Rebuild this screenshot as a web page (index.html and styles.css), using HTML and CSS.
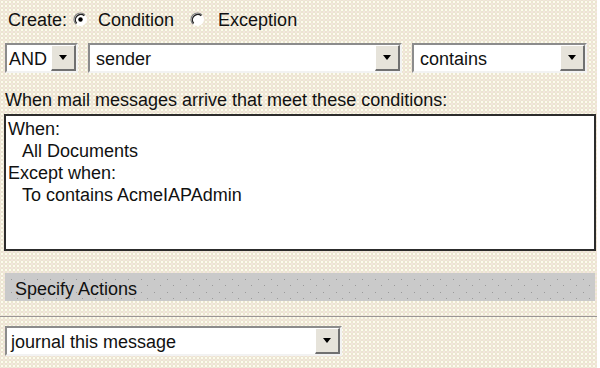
FILE: index.html
```html
<!DOCTYPE html>
<html lang="en">
<head>
    <meta charset="UTF-8">
    <meta name="viewport" content="width=device-width, initial-scale=1.0">
    <title>Mail rule</title>
    <link rel="stylesheet" href="styles.css">
</head>
<body>
    <div class="page">
        <div class="create-row">
            <span>Create:</span>
            <label class="radio">
                <svg width="15" height="15" viewBox="0 0 15 15">
                    <circle cx="7.5" cy="7.5" r="6.5" fill="#fff"/>
                    <path d="M2.9 12.1 A6.5 6.5 0 0 1 12.1 2.9" stroke="#808080" stroke-width="1.2" fill="none"/>
                    <path d="M3.7 11.3 A5.4 5.4 0 0 1 11.3 3.7" stroke="#202020" stroke-width="1.3" fill="none"/>
                    <circle cx="7.5" cy="7.5" r="2.2" fill="#000"/>
                </svg>
                Condition
            </label>
            <label class="radio">
                <svg width="15" height="15" viewBox="0 0 15 15">
                    <circle cx="7.5" cy="7.5" r="6.5" fill="#fff"/>
                    <path d="M2.9 12.1 A6.5 6.5 0 0 1 12.1 2.9" stroke="#808080" stroke-width="1.2" fill="none"/>
                    <path d="M3.7 11.3 A5.4 5.4 0 0 1 11.3 3.7" stroke="#202020" stroke-width="1.3" fill="none"/>
                </svg>
                Exception
            </label>
        </div>

        <div class="criteria">
            <div class="combo combo-and">
                <span class="value">AND</span>
                <span class="arrow"><i></i></span>
            </div>
            <div class="combo combo-field">
                <span class="value">sender</span>
                <span class="arrow"><i></i></span>
            </div>
            <div class="combo combo-op">
                <span class="value">contains</span>
                <span class="arrow"><i></i></span>
            </div>
        </div>

        <div class="cond-label">When mail messages arrive that meet these conditions:</div>
        <div class="cond-box">
            <div>When:</div>
            <div class="indent">All Documents</div>
            <div>Except when:</div>
            <div class="indent">To contains AcmeIAPAdmin</div>
        </div>

        <div class="section-bar">Specify Actions</div>
        <div class="separator"></div>

        <div class="combo combo-action">
            <span class="value">journal this message</span>
            <span class="arrow"><i></i></span>
        </div>
    </div>
</body>
</html>
```

FILE: styles.css
```css
html{
    background: #fff;
}
body{
    margin: 0;
    font-family: "Liberation Sans", Arial, sans-serif;
    font-size: 18px;
    color: #111;
}
.page{
    width: 597px;
    height: 368px;
    box-sizing: border-box;
    background-color: #ebe6d0;
    background-image:
        radial-gradient(circle, #fdfbee 0.9px, transparent 1.3px),
        radial-gradient(circle, #f3e6df 0.7px, transparent 1px);
    background-size: 4px 4px, 4px 4px;
    background-position: 0 0, 2px 2px;
    overflow: hidden;
}
.create-row{
    display: flex;
    align-items: center;
    height: 38px;
    line-height: 38px;
    padding: 1px 0 0 8px;
    box-sizing: border-box;
}
.radio{
    display: flex;
    align-items: center;
    gap: 10px;
    margin-left: 6px;
}
.radio + .radio{
    margin-left: 16px;
    gap: 13px;
}
.criteria{
    display: flex;
    gap: 10px;
    margin-top: 5px;
    padding-left: 5px;
}
.combo{
    height: 30px;
    box-sizing: border-box;
    display: flex;
    background: #fff;
    border: 2px solid;
    border-color: #8c8c8c #f2f2f2 #f2f2f2 #8c8c8c;
}
.combo .value{
    flex: 1;
    padding: 2px 0 0 6px;
    line-height: 24px;
    white-space: nowrap;
}
.combo .arrow{
    width: 22px;
    display: flex;
    align-items: center;
    justify-content: center;
    background: #e6e3da;
    border-top: 1px solid #fff;
    border-left: 1px solid #fff;
    border-right: 2px solid #707070;
    border-bottom: 2px solid #707070;
}
.combo .arrow i{
    width: 0;
    height: 0;
    border-left: 4px solid transparent;
    border-right: 4px solid transparent;
    border-top: 5px solid #000;
}
.combo-and{
    width: 73px;
}
.combo-and .value{
    padding-left: 2px;
}
.combo-field{
    width: 314px;
}
.combo-op{
    width: 175px;
}
.combo-action{
    width: 337px;
    margin-left: 5px;
}
.combo-action .value{
    padding-left: 4px;
}
.cond-label{
    margin-top: 16px;
    padding-left: 5px;
    line-height: 22px;
    white-space: nowrap;
}
.cond-box{
    margin: 3px 0 0 4px;
    width: 592px;
    height: 137px;
    box-sizing: border-box;
    background: #fff;
    border: 2px solid #2c2c2c;
    padding: 2px 2px;
    line-height: 22px;
}
.cond-box .indent{
    padding-left: 14px;
}
.section-bar{
    margin: 22px 0 0 5px;
    width: 590px;
    height: 28px;
    box-sizing: border-box;
    padding: 4px 0 0 10px;
    line-height: 24px;
    background-color: #cacaca;
    background-image:
        radial-gradient(circle, #9a9a9a 0.7px, transparent 1px),
        radial-gradient(circle, #9a9a9a 0.7px, transparent 1px);
    background-size: 13px 13px, 13px 13px;
    background-position: 0 0, 6px 6px;
}
.separator{
    margin-top: 15px;
    height: 1px;
    border-top: 1px solid #9b9696;
    margin-bottom: 8px;
}
```
